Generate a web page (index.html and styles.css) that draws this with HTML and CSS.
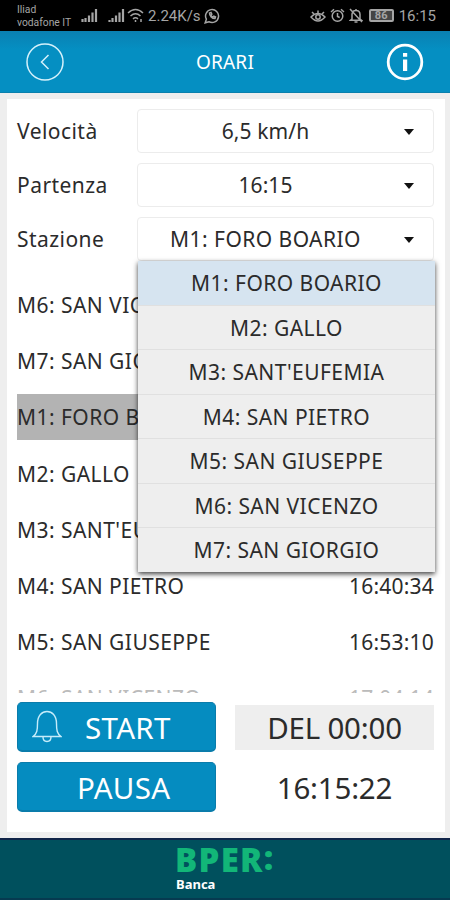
FILE: index.html
```html
<!DOCTYPE html>
<html lang="it">
<head>
    <meta charset="UTF-8">
    <meta name="viewport" content="width=device-width, initial-scale=1.0">
    <title>Orari</title>
    <link rel="stylesheet" href="styles.css">
</head>
<body>

<div class="status">
    <div class="carrier"><span>Iliad</span><span>vodafone IT</span></div>
    <svg class="signal" width="17" height="15" viewBox="0 0 17 15"><path d="M1.5 14v-3M4.5 14v-4M8 14V7.500M11.500 14V4.500M15 14V1"/></svg>
    <svg class="signal second" width="17" height="15" viewBox="0 0 17 15"><path d="M1.500 14v-2M4.500 14v-4M8 14V7.500M11.500 14V4.500M15 14V1"/></svg>
    <svg class="wifi" width="17" height="15" viewBox="0 0 17 15"><path d="M1 5q7.500-7 15 0M3.500 8q5-4.500 10 0M6 10.800q2.500-2 5 0M8.500 12v2M14 11v3"/></svg>
    <span class="speed">2.24K/s</span>
    <svg class="whatsapp" width="16" height="16" viewBox="0 0 16 16"><path d="M1.200 14.800l1.200-3.600a6.500 6.500 0 1 1 2.500 2.500z"/><path d="M5.500 5c0 3 2.500 5.500 5.500 5.500l.5-1.500-1.700-.8-1 .8C7.900 8.600 7.300 8 7 7.200l.8-1L7 4.500z"/></svg>
    <div class="right">
        <svg width="16" height="14" viewBox="0 0 16 14"><path d="M1 8q7-7 14 0-7 8-14 0zM2 3l2 2M8 1.500V4M14 3l-2 2"/><circle cx="8" cy="8" r="2.200"/></svg>
        <svg width="15" height="15" viewBox="0 0 15 15"><circle cx="7.500" cy="8" r="5.300"/><path d="M7.500 5v3.500l2.200 1M1 4l3-2.700M14 4l-3-2.700"/></svg>
        <svg width="14" height="15" viewBox="0 0 14 15"><path d="M3 11V6.500C3 1 11 1 11 6.500V11l1.500 1.200H1.500zM7 1v2M5.500 14h3M1 1l12 13"/></svg>
        <span class="battery">86</span>
        <span class="clock">16:15</span>
    </div>
</div>

<div class="header">
    <svg width="38" height="38" viewBox="0 0 38 38"><circle cx="19" cy="19" r="18" class="thin"/><path class="thin" d="M22.500 12l-7 7 7 7"/></svg>
    <h1>ORARI</h1>
    <svg width="38" height="38" viewBox="0 0 38 38"><circle cx="19" cy="19" r="16.800" class="thick"/><path class="info" d="M17 16.500h4.200V28H17zM17 10h4.200v3.800H17z"/></svg>
</div>

<div class="card">
    <div class="field">
        <label>Velocità</label>
        <div class="select"><span class="number">6,5 km/h</span></div>
    </div>
    <div class="field">
        <label>Partenza</label>
        <div class="select"><span class="number">16:15</span></div>
    </div>
    <div class="field">
        <label>Stazione</label>
        <div class="select">
            <span>M1: FORO BOARIO</span>
            <ul class="menu">
                <li class="active">M1: FORO BOARIO</li>
                <li>M2: GALLO</li>
                <li>M3: SANT'EUFEMIA</li>
                <li>M4: SAN PIETRO</li>
                <li>M5: SAN GIUSEPPE</li>
                <li>M6: SAN VICENZO</li>
                <li>M7: SAN GIORGIO</li>
            </ul>
        </div>
    </div>

    <div class="list">
        <div class="row"><span>M6: SAN VICENZO</span></div>
        <div class="row"><span>M7: SAN GIORGIO</span></div>
        <div class="row current"><span>M1: FORO BOARIO</span></div>
        <div class="row"><span>M2: GALLO</span></div>
        <div class="row"><span>M3: SANT'EUFEMIA</span></div>
        <div class="row"><span>M4: SAN PIETRO</span><span class="hour">16:40:34</span></div>
        <div class="row"><span>M5: SAN GIUSEPPE</span><span class="hour">16:53:10</span></div>
        <div class="row next"><span>M6: SAN VICENZO</span><span class="hour">17:04:14</span></div>
    </div>

    <div class="controls">
        <button class="start">
            <svg width="30" height="34" viewBox="0 0 30 34"><path d="M1 26.500c4-3 4.500-6 4.500-13C5.500 5.500 10 1.500 15 1.500s9.500 4 9.500 12c0 7 .5 10 4.500 13zM11 27c0 6 8 6 8 0"/></svg>
            <span>START</span>
        </button>
        <div class="delay">DEL 00:00</div>
        <button class="pause"><span>PAUSA</span></button>
        <div class="time">16:15:22</div>
    </div>
</div>

<div class="footer">
    <div class="bper">BPER<span class="colon">:</span></div>
    <div class="banca">Banca</div>
</div>

</body>
</html>
```

FILE: styles.css
```css
* {
    box-sizing: border-box;
}
body {
    margin: 0;
    width: 450px;
    height: 900px;
    overflow: hidden;
    display: flex;
    flex-direction: column;
    background-color: #eee;
    color: #2b2b2b;
    font-family: "Noto Sans", sans-serif;
    font-size: 21px;
    letter-spacing: 0.45px;
}
svg {
    fill: none;
    flex: none;
}
.status {
    height: 31px;
    background-color: #000;
    color: #a5a5a5;
    display: flex;
    align-items: center;
    padding: 0 14px 0 17px;
    font-family: Roboto, sans-serif;
    font-size: 15px;
    letter-spacing: 0;
}
.status svg {
    stroke: #a5a5a5;
    stroke-width: 1.5;
}
.status .signal {
    stroke-width: 2.2;
}
.carrier {
    display: flex;
    flex-direction: column;
    width: 64px;
    font-size: 10.3px;
    line-height: 13px;
    margin-top: 1px;
}
.second {
    margin-left: 10px;
}
.wifi {
    margin: 0 4px 0 2px;
}
.speed {
    width: 56px;
}
.right {
    margin-left: auto;
    display: flex;
    align-items: center;
    gap: 4px;
}
.battery {
    border: 2px solid #a5a5a5;
    border-radius: 2px;
    background-color: #444;
    height: 13px;
    width: 25px;
    margin-left: 2px;
    line-height: 9px;
    text-align: center;
    font-size: 11px;
    font-weight: bold;
}
.clock {
    margin-left: 1px;
}
.header {
    height: 62px;
    background: linear-gradient(#0a80b2, #058fc2 30%);
    border-bottom: 1px solid #0a80ad;
    display: flex;
    align-items: center;
    justify-content: space-between;
    padding: 0 26px;
    color: #fff;
}
.header h1 {
    margin: 0;
    font-size: 19px;
    font-weight: normal;
    letter-spacing: 0.2px;
}
.thin {
    stroke: #d5f1fb;
    stroke-width: 1.5;
}
.thick {
    stroke: #fff;
    stroke-width: 2.8;
}
.info {
    fill: #fff;
}
.card {
    margin: 6px 5px 0 7px;
    height: 733px;
    background-color: #fff;
    padding: 10px 11px 0 10px;
}
.field {
    display: flex;
    align-items: center;
    height: 44px;
    margin-bottom: 10px;
}
.field label {
    width: 120px;
}
.select {
    position: relative;
    flex: 1;
    height: 44px;
    border: 1px solid #ececec;
    border-radius: 4px;
    text-align: center;
    line-height: 43px;
    padding-right: 40px;
}
.number {
    letter-spacing: 0.1px;
}
.select::after {
    content: "";
    position: absolute;
    right: 19px;
    top: 19px;
    border: 5.5px solid transparent;
    border-top: 6px solid #111;
    border-bottom: 0;
}
.menu {
    position: absolute;
    z-index: 1;
    top: 43px;
    left: 0;
    width: 297px;
    margin: 0;
    padding: 0;
    list-style: none;
    background-color: #eee;
    box-shadow: 0 2px 5px rgba(0, 0, 0, 0.75);
}
.menu li {
    height: 44.5px;
    line-height: 44px;
    border-bottom: 1px solid #e0e0e0;
}
.menu li:last-child {
    height: 44px;
    border-bottom: 0;
}
.menu .active {
    background-color: #d6e4f0;
}
.list {
    height: 422px;
    padding-top: 11px;
    overflow: hidden;
}
.row {
    display: flex;
    justify-content: space-between;
    height: 46px;
    line-height: 46px;
    margin-bottom: 10.2px;
}
.hour {
    letter-spacing: 0.2px;
}
.current {
    background-color: #b3b3b3;
}
.next {
    color: #bbb;
}
.controls {
    display: grid;
    grid-template-columns: 199px 199px;
    grid-template-rows: 50px 50px;
    gap: 10px 19px;
    align-items: center;
    margin-top: 9px;
    font-size: 29.5px;
    letter-spacing: -0.2px;
}
button {
    height: 50px;
    border: 1px solid #0a7cab;
    border-bottom-width: 2px;
    border-radius: 5px;
    background-color: #058cc0;
    color: #fff;
    font: inherit;
    letter-spacing: 0.3px;
    display: flex;
    align-items: center;
    padding: 2px 14px 0;
}
button svg {
    stroke: #c5ecfa;
    stroke-width: 1.4;
    margin-top: -2px;
}
.start span {
    margin-left: 23px;
}
.pause {
    padding-left: 59px;
}
.delay {
    height: 45px;
    line-height: 46px;
    background-color: #eee;
    text-align: center;
}
.time {
    text-align: center;
}
.footer {
    margin-top: 6px;
    height: 62px;
    background-color: #00505d;
    border-top: 2px solid #102448;
    border-bottom: 2px solid #063a50;
    padding: 0 0 0 175px;
}
.bper {
    height: 36px;
    color: #12b678;
    font-size: 33px;
    line-height: 40px;
    font-weight: 900;
    letter-spacing: 1.3px;
}
.colon {
    position: relative;
    top: -2px;
}
.banca {
    padding-left: 1px;
    color: #fff;
    font-size: 13px;
    line-height: 16px;
    font-weight: bold;
    letter-spacing: 0;
}
```
